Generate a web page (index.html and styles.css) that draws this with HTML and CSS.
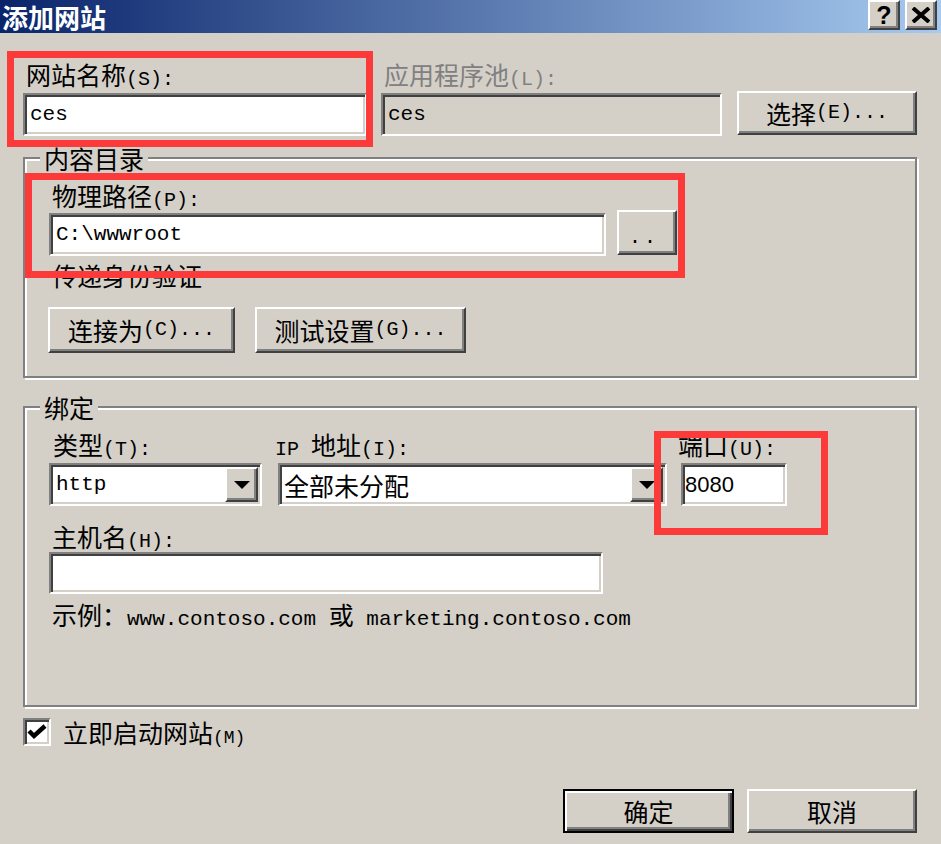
FILE: index.html
```html
<!DOCTYPE html>
<html lang="zh-CN">
<head>
<meta charset="utf-8">
<title>添加网站</title>
<link rel="stylesheet" href="styles.css">
</head>
<body>
<div class="dialog">
  <div class="titlebar">
    <span class="title">添加网站</span>
    <div class="caps">
      <span class="cap cap-help">?</span>
      <span class="cap cap-close"><svg width="20" height="16" viewBox="0 0 20 16"><path d="M2 1 L18 15 M18 1 L2 15" stroke="#000" stroke-width="4" fill="none"/></svg></span>
    </div>
  </div>
  <div class="content">
    <div class="row-top">
      <div class="field f-name">
        <div class="lbl">网站名称<span class="hw">(S):</span></div>
        <div class="input mono">ces</div>
      </div>
      <div class="field f-pool">
        <div class="lbl disabled">应用程序池<span class="hw">(L):</span></div>
        <div class="input mono readonly">ces</div>
      </div>
      <div class="btn b-select">选择<span class="hw">(E)...</span></div>
    </div>

    <fieldset class="group g-content">
      <legend>内容目录</legend>
      <div class="gbody gb-content">
        <div class="lbl ind">物理路径<span class="hw">(P):</span></div>
        <div class="path-row">
          <div class="input mono path">C:\wwwroot</div>
          <div class="btn b-browse"><span class="dots">..</span></div>
        </div>
        <div class="lbl ind auth">传递身份验证</div>
        <div class="btn-row">
          <div class="btn b-connect">连接为<span class="hw">(C)...</span></div>
          <div class="btn b-test">测试设置<span class="hw">(G)...</span></div>
        </div>
      </div>
    </fieldset>

    <fieldset class="group g-bind">
      <legend>绑定</legend>
      <div class="gbody gb-bind">
        <div class="bind-row">
          <div class="field f-type">
            <div class="lbl">类型<span class="hw">(T):</span></div>
            <div class="input select">
              <span class="sel-text mono">http</span>
              <span class="sel-arrow"><svg width="16" height="8" viewBox="0 0 16 8"><polygon points="0,0 16,0 8,8" fill="#000"/></svg></span>
            </div>
          </div>
          <div class="field f-ip">
            <div class="lbl"><span class="hw">IP </span>地址<span class="hw">(I):</span></div>
            <div class="input select">
              <span class="sel-text ip-text">全部未分配</span>
              <span class="sel-arrow"><svg width="16" height="8" viewBox="0 0 16 8"><polygon points="0,0 16,0 8,8" fill="#000"/></svg></span>
            </div>
          </div>
          <div class="field f-port">
            <div class="lbl">端口<span class="hw">(U):</span></div>
            <div class="input port">8080</div>
          </div>
        </div>
        <div class="field f-host">
          <div class="lbl">主机名<span class="hw">(H):</span></div>
          <div class="input host"></div>
        </div>
        <div class="example">示例：<span class="m">www.contoso.com </span>或<span class="m"> marketing.contoso.com</span></div>
      </div>
    </fieldset>

    <div class="check-row">
      <span class="checkbox"><svg width="20" height="16" viewBox="0 0 20 16"><path d="M2 7 L7 12 L18 2" stroke="#000" stroke-width="4.5" fill="none"/></svg></span>
      <span class="check-label">立即启动网站<span class="hw small">(M)</span></span>
    </div>

    <div class="footer">
      <div class="btn b-ok">确定</div>
      <div class="btn b-cancel">取消</div>
    </div>
  </div>

  <div class="mark m1"></div>
  <div class="mark m2"></div>
  <div class="mark m3"></div>
</div>
</body>
</html>
```

FILE: styles.css
```css
* { box-sizing: border-box; }
html, body { margin: 0; padding: 0; }
body {
  width: 941px;
  height: 844px;
  overflow: hidden;
  background: #d4d0c8;
  font-family: "Noto Sans CJK SC", "Noto Sans", sans-serif;
  font-size: 25px;
  color: #000;
}
.dialog { position: relative; width: 941px; height: 844px; }

/* title bar */
.titlebar {
  height: 33px;
  display: flex;
  justify-content: space-between;
  align-items: flex-start;
  padding: 0 4px 0 2px;
  background: linear-gradient(90deg, #0a246a 0%, #a6caf0 100%);
}
.title { color: #fff; font-weight: 700; font-size: 26px; line-height: 33px; height: 33px; }
.caps { display: flex; gap: 5px; }
.cap {
  width: 32px; height: 30px;
  display: flex; align-items: center; justify-content: center;
  background: #d4d0c8;
  border: 2px solid;
  border-color: #fff #404040 #404040 #fff;
  box-shadow: inset -2px -2px #808080;
}
.cap-help { font-family: "Liberation Sans", sans-serif; font-weight: 700; font-size: 25px; line-height: 1; }

/* main */
.content { padding: 26px 24px 0 23px; }
.row-top { display: flex; align-items: flex-end; }
.f-name { width: 344px; }
.f-pool { width: 341px; margin-left: 14px; }
.b-select { width: 180px; height: 44px; margin-left: 15px; margin-bottom: 1px; }

.lbl { line-height: 30px; height: 30px; white-space: nowrap; }
.hw { font-family: "Liberation Mono", monospace; font-size: 20px; }
.hw.small { font-size: 18px; }
.lbl.disabled { color: #808080; }
.field .lbl { margin-left: 3px; margin-bottom: 4px; }

.input {
  height: 43px;
  background: #fff;
  border: 2px solid;
  border-color: #808080 #fff #fff #808080;
  box-shadow: inset 2px 2px #404040, inset -2px -2px #d4d0c8;
  padding: 2px 2px 2px 5px;
  display: flex;
  align-items: center;
  white-space: nowrap;
}
.mono { font-family: "Liberation Mono", monospace; font-size: 21px; }
.readonly { background: #d4d0c8; }

.btn {
  display: flex; align-items: center; justify-content: center;
  background: #d4d0c8;
  border: 2px solid;
  border-color: #fff #404040 #404040 #fff;
  box-shadow: inset -2px -2px #808080;
  white-space: nowrap;
  line-height: 1;
}

/* group boxes */
.group {
  margin: 0;
  padding: 0;
  min-width: 0;
  border: 2px solid #808080;
  box-shadow: inset 2px 2px #fff, 2px 2px #fff;
}
.group legend {
  margin-left: 15px;
  padding: 0 4px;
  line-height: 26px;
  height: 26px;
  font-size: 25px;
  background: #d4d0c8;
}
.g-content { margin-top: 9px; }
.gbody { padding: 9px 22px 0 24px; }
.gb-content { padding-bottom: 23px; }
.lbl.ind { margin-left: 3px; }

.path-row { display: flex; align-items: flex-start; margin-top: 3px; }
.path { width: 557px; }
.b-browse { width: 60px; height: 45px; margin-left: 11px; margin-top: -3px; }
.dots { font-family: "Liberation Mono", monospace; font-size: 20px; letter-spacing: 3px; padding-top: 10px; margin-left: -6px; }
.lbl.auth { margin-top: 4px; }
.btn-row { display: flex; gap: 20px; margin-top: 17px; margin-left: -1px; }
.b-connect { width: 187px; height: 46px; }
.b-test { width: 211px; height: 46px; }

.g-bind { margin-top: 16px; }
.gb-bind { padding-bottom: 76px; }
.bind-row { display: flex; }
.f-type { width: 213px; }
.f-ip { width: 389px; margin-left: 16px; }
.f-port { width: 106px; margin-left: 14px; }
.f-type .lbl { margin-left: 4px; }
.f-ip .lbl, .f-port .lbl { margin-left: -3px; }

.select { padding: 2px; align-items: stretch; }
.sel-text { flex: 1; display: flex; align-items: center; padding-left: 3px; }
.ip-text { padding-left: 2px; }
.sel-arrow {
  width: 33px;
  display: flex; align-items: center; justify-content: center;
  background: #d4d0c8;
  border: 2px solid;
  border-color: #fff #404040 #404040 #fff;
  box-shadow: inset -2px -2px #808080;
}
.port { font-family: "Liberation Sans", sans-serif; font-size: 22px; padding-left: 2px; }

.f-host .lbl { margin-top: 15px; margin-bottom: 1px; }
.host { width: 554px; height: 42px; }
.example { margin-top: 5px; margin-left: 3px; line-height: 30px; height: 30px; white-space: pre; }
.example .m { font-family: "Liberation Mono", monospace; font-size: 21px; }

.check-row { display: flex; align-items: center; margin-top: 11px; height: 28px; }
.checkbox {
  width: 28px; height: 28px;
  background: #fff;
  border: 2px solid;
  border-color: #808080 #fff #fff #808080;
  box-shadow: inset 2px 2px #404040, inset -2px -2px #d4d0c8;
  display: flex; align-items: center; justify-content: center;
}
.check-label { margin-left: 12px; line-height: 28px; height: 28px; }

.footer { display: flex; justify-content: flex-end; gap: 13px; margin-top: 43px; }
.b-ok {
  width: 171px; height: 44px;
  border: 2px solid #000;
  box-shadow: inset 2px 2px #fff, inset -2px -2px #404040, inset -4px -4px #808080;
}
.b-cancel { width: 170px; height: 44px; }

/* annotation overlays */
.mark { position: absolute; border: 7px solid #fc3a3a; pointer-events: none; }
.m1 { left: 7px; top: 51px; width: 366px; height: 96px; }
.m2 { left: 25px; top: 173px; width: 660px; height: 105px; }
.m3 { left: 654px; top: 431px; width: 174px; height: 104px; }
```
